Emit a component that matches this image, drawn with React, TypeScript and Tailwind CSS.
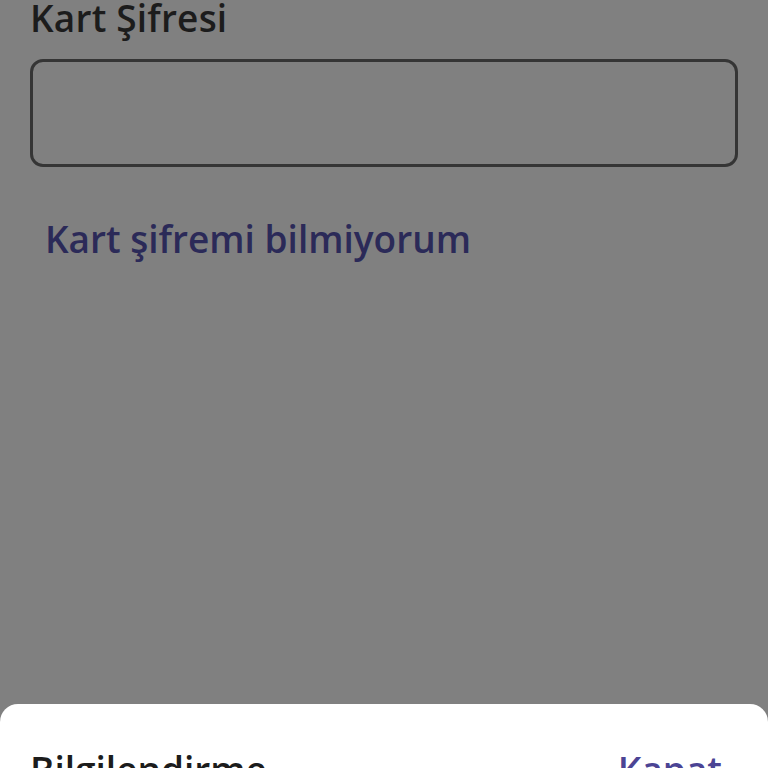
import React from "react";

export default function App() {
  return (
    <div
      className="relative w-[768px] h-[768px] overflow-hidden bg-[#808080] flex flex-col"
      style={{ fontFamily: '"Open Sans", "Noto Sans", sans-serif' }}
    >
      <div className="px-[30px] flex flex-col">
        <div className="mt-[-6px] text-[37px] leading-[48px] text-[#1c1c1c] font-semibold tracking-[0.2px]">Kart Şifresi</div>
        <div className="mt-[17px] h-[108px] rounded-[13px] border-[3px] border-[#353535]" />
        <div className="mt-[48px] ml-[15px] text-[37px] leading-[48px] text-[#2b2a58] font-semibold">
          Kart şifremi bilmiyorum
        </div>
      </div>
      <div className="flex-1" />
      <div className="h-[64px] bg-white rounded-t-[18px] px-[30px] pt-[42px] flex justify-between items-start">
        <div className="text-[37px] leading-[48px] font-semibold text-[#1c1c1c]">Bilgilendirme</div>
        <div className="mr-[16px] text-[37px] leading-[48px] font-semibold text-[#4b4494]">Kapat</div>
      </div>
    </div>
  );
}
